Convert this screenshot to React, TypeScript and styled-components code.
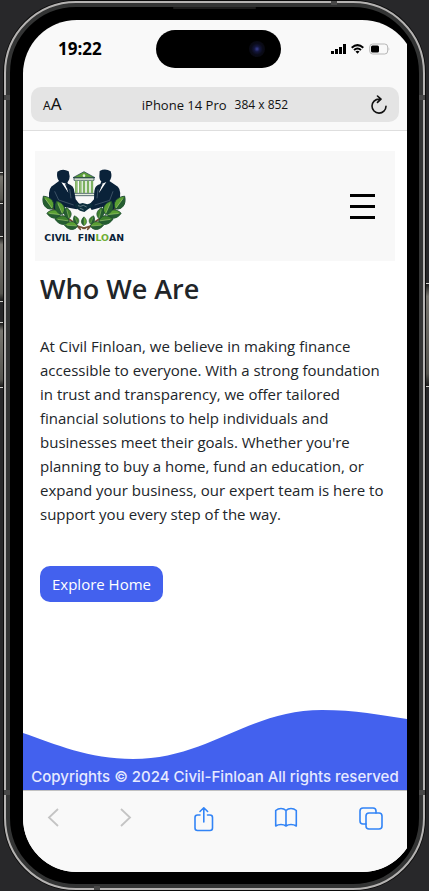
import React from "react";
import styled, { createGlobalStyle } from "styled-components";

const GlobalStyle = createGlobalStyle`
  * { box-sizing: border-box; }
  body {
    margin: 0;
    background: #28282a;
    color: #212529;
    font-family: "Open Sans", "Noto Sans", sans-serif;
  }
  h1, p { margin: 0; }
  button { font: inherit; color: inherit; border: 0; background: none; padding: 0; cursor: pointer; }
  svg { display: block; }
`;

const Stage = styled.div`
  display: flex;
  min-height: 100vh;
  padding: 1px 4px;
`;

const Phone = styled.div`
  position: relative;
  flex: 1;
  display: flex;
  border: 2px solid #b5b3b2;
  border-radius: 72px;
  background: #b5b3b2;
  box-shadow: 0 0 0 1px #0b0b0b;
`;

const Bezel = styled.div`
  flex: 1;
  min-width: 0;
  display: flex;
  padding: 13px 12px 12px 13px;
  border: 4px solid #333434;
  border-radius: 70px;
  background: #000;
`;

const Screen = styled.div`
  flex: 1;
  min-width: 0;
  display: flex;
  flex-direction: column;
  background: #f9f9f9;
  clip-path: inset(0 -9px 0 0 round 54px);
`;

const SideKey = styled.span<{ $side: "left" | "right"; $top: number; $length: number }>`
  position: absolute;
  top: ${(p) => p.$top}px;
  ${(p) => p.$side}: -6px;
  width: 3px;
  height: ${(p) => p.$length}px;
  border: solid #d0d0cc;
  border-width: 1px 0;
  background: linear-gradient(#1b1b1b, #77756f 12%, #55544f 88%, #1b1b1b);
`;

const Band = styled.span<{ $edge: "left" | "right"; $top: number }>`
  position: absolute;
  top: ${(p) => p.$top}px;
  ${(p) => p.$edge}: -2px;
  width: 6px;
  height: 5px;
  background: #484848;
`;

const CapBand = styled.span<{ $edge: "top" | "bottom"; $left: string }>`
  position: absolute;
  left: ${(p) => p.$left};
  ${(p) => p.$edge}: -2px;
  width: 6px;
  height: 4px;
  background: #484848;
`;

const Speaker = styled.span`
  position: absolute;
  top: 4px;
  left: 40%;
  right: 40%;
  height: 2px;
  border-radius: 1px;
  background: #1c1c1c;
`;

const StatusBar = styled.div`
  display: grid;
  grid-template-columns: 134fr 125px 126fr;
  align-items: center;
  padding-top: 10px;
`;

const Clock = styled.time`
  padding-left: 35px;
  color: #000;
  font-size: 17px;
  line-height: 24px;
  font-weight: 700;
`;

const Island = styled.div`
  display: flex;
  align-items: center;
  justify-content: flex-end;
  height: 38px;
  padding-right: 16px;
  border-radius: 19px;
  background: #000;
`;

const Lens = styled.span`
  width: 16px;
  height: 16px;
  border-radius: 50%;
  background: radial-gradient(circle, #30357e 0 6%, #14173f 24%, #0a0b19 50%, #060608 100%);
`;

const Signals = styled.div`
  display: flex;
  align-items: center;
  justify-content: flex-end;
  gap: 5px;
  padding-right: 17px;
`;

const AddressBar = styled.div`
  display: grid;
  grid-template-columns: 48px 1fr 48px;
  align-items: center;
  height: 35px;
  margin: 19px 8px 8px;
  border-radius: 10px;
  background: #e4e4e4;
  color: #111;
`;

const TextSize = styled.button`
  padding-left: 12px;
  text-align: left;
  font-family: "Noto Sans", sans-serif;
  font-size: 17px;
  line-height: 24px;
  small { font-size: 12px; }
`;

const Device = styled.div`
  display: flex;
  align-items: center;
  justify-content: center;
  gap: 8px;
  font-size: 13px;
  line-height: 20px;
  white-space: nowrap;
`;

const Resolution = styled.span`
  font-size: 12px;
`;

const Reload = styled.button`
  justify-self: end;
  padding-right: 11px;
`;

const Site = styled.div`
  flex: 1;
  display: flex;
  flex-direction: column;
  border-top: 1px solid #dedede;
  background: #fff;
`;

const Header = styled.header`
  display: flex;
  align-items: center;
  justify-content: space-between;
  height: 110px;
  margin: 20px 12px 0;
  padding: 0 20px 0 5px;
  background: #f8f8f8;
`;

const MenuButton = styled.button`
  display: grid;
  gap: 8px;
  width: 25px;
  span { height: 3px; background: #000; }
`;

const Main = styled.main`
  flex: 1;
  padding: 10px 17px 0;
`;

const Title = styled.h1`
  font-size: 27px;
  line-height: 36px;
  font-weight: 600;
`;

const Copy = styled.p`
  margin-top: 27px;
  font-size: 15px;
  line-height: 24px;
`;

const Explore = styled.button`
  height: 36px;
  margin-top: 40px;
  padding: 0 12px;
  border-radius: 10px;
  background: #4361ee;
  color: #fff;
  font-size: 15px;
  line-height: 24px;
`;

const Wave = styled.svg`
  width: 100%;
  height: 50px;
`;

const Copyright = styled.footer`
  height: 31px;
  background: #4361ee;
  color: #e6eaff;
  text-align: center;
  font-family: Inter, sans-serif;
  font-size: 15px;
  font-weight: 500;
  line-height: 36px;
  white-space: nowrap;
`;

const BrowserBar = styled.nav`
  display: grid;
  grid-template-columns: 73fr 78fr 82fr 85fr 24px;
  align-items: start;
  justify-items: start;
  height: 82px;
  padding: 15px 24px 0 18px;
  border-top: 1px solid #c2c2c2;
  background: #f9f9f9;
`;

const Leaf = ({ x, y, r, s = 1, dark = false }: { x: number; y: number; r: number; s?: number; dark?: boolean }) => (
  <g transform={`translate(${x} ${y}) rotate(${r}) scale(${s})`}>
    <path d="M0 0C-15-8-15-25 0-38C15-25 15-8 0 0Z" fill={dark ? "#3d7f2c" : "#5a9f33"} stroke="#1b4533" strokeWidth="2" />
    <path d="M0 0C-15-8-15-25 0-38Z" fill="#255d30" />
    <path d="M0-3V-31" stroke="#a9cf7c" strokeWidth="1.5" />
  </g>
);

const Branch = () => (
  <g>
    <path d="M64 184Q88 229 165 250M98 214Q126 222 151 253" fill="none" stroke="#735034" strokeWidth="5" strokeLinecap="round" />
    <Leaf x={92} y={209} r={-84} s={1.1} />
    <Leaf x={68} y={192} r={-36} s={1.25} />
    <Leaf x={98} y={208} r={-24} s={1.15} />
    <Leaf x={118} y={228} r={-82} s={1.15} dark />
    <Leaf x={117} y={221} r={-14} s={0.9} dark />
    <Leaf x={143} y={243} r={-86} s={1.05} />
    <Leaf x={143} y={237} r={-22} s={0.7} dark />
  </g>
);

const Logo = () => (
  <svg width="88" height="80" viewBox="30 63 264 240" role="img" aria-label="Civil Finloan">
    <g fill="#5d9f3a" stroke="#0c2e3a" strokeWidth="2">
      <path d="M129 98L162 80L195 98Z" />
      <path d="M132 99H192V106H132ZM130 145H194V152H130Z" fill="#e5eddc" />
    </g>
    <circle cx="162" cy="92" r="4" fill="#e5eddc" />
    <path d="M139 107V144M151 107V144M162 107V144M174 107V144M186 107V144" stroke="#5f9e43" strokeWidth="7" />
    <path d="M139 107V144M151 107V144M162 107V144M174 107V144M186 107V144" stroke="#b9d49d" strokeWidth="2" />
    <g fill="#0a2239">
      <path d="M82 80Q98 69 116 79L119 94Q118 109 110 113Q101 119 91 112L85 105Q79 95 82 80Z" />
      <path d="M88 107L111 109L114 116Q132 121 133 140L137 163L150 179L140 193L104 186L107 208L70 196L57 160Q54 126 72 119Z" />
      <path d="M209 78Q226 69 242 79Q247 94 241 104L236 112Q226 118 217 112Q208 107 208 94Z" />
      <path d="M214 109L237 107L256 120Q274 127 270 157L258 192L216 208L219 185L185 195L176 181L192 163L193 138Q194 121 211 117Z" />
    </g>
    <path d="M94 112L108 116L115 143ZM229 111L215 117L207 144Z" fill="#fff" />
    <path d="M105 118L109 117L115 140ZM218 117L213 118L208 139Z" fill="#0a2239" />
    <path d="M74 139L86 165L131 180M249 139L239 166L194 180M119 132L123 160M204 133L201 160" fill="none" stroke="#6c8190" strokeWidth="1.5" />
    <path d="M134 180L140 174L150 176L158 174L172 178L184 174L190 183L175 192L163 201L150 197L138 189Z" fill="#0b2d3c" />
    <path d="M144 182L152 184L160 181L170 186M149 190L156 192L161 195" fill="none" stroke="#b9c6c8" strokeWidth="1.5" />
    <Branch />
    <g transform="translate(324 0) scale(-1 1)"><Branch /></g>
    <Leaf x={162} y={242} r={0} s={0.7} />
    <text x="43" y="287" fontFamily="DejaVu Sans, sans-serif" fontWeight="700" fontSize="28" fill="#0a2239">
      CIVIL{"\u00a0\u00a0"}FIN<tspan fill="#6fae35">LO</tspan>AN
    </text>
  </svg>
);

const blue = { fill: "none", stroke: "#3284f6", strokeWidth: 1.6, strokeLinecap: "round", strokeLinejoin: "round" } as const;

export default function App() {
  return (
    <Stage>
      <GlobalStyle />
      <Phone>
        <SideKey $side="left" $top={169} $length={32} />
        <SideKey $side="left" $top={233} $length={66} />
        <SideKey $side="left" $top={319} $length={66} />
        <SideKey $side="right" $top={280} $length={104} />
        <Bezel>
          <Screen>
            <StatusBar>
              <Clock>19:22</Clock>
              <Island><Lens /></Island>
              <Signals>
                <svg width="15" height="10" viewBox="0 0 15 10" aria-label="Mobile signal">
                  <path d="M0 7h3v3H0zM4 5h3v5H4zM8 3h3v7H8zM12 0h3v10h-3z" />
                </svg>
                <svg width="13" height="10" viewBox="0 0 13 10" fill="none" stroke="#000" strokeWidth="2" aria-label="Wi-Fi">
                  <path d="M.7 3.7Q6.5-1.4 12.3 3.7M3 6Q6.5 3 10 6" />
                  <path d="M4.5 7.5Q6.5 6 8.5 7.5L6.5 9.8Z" fill="#000" stroke="none" />
                </svg>
                <svg width="21" height="12" viewBox="0 0 21 12" aria-label="Battery">
                  <rect x=".7" y="1" width="18" height="10" rx="3" fill="none" stroke="#b7b7b7" />
                  <rect x="2" y="2.5" width="8" height="7" rx="1.5" />
                  <path d="M19.7 4.3Q21 6 19.7 7.7Z" fill="#aaa" />
                </svg>
              </Signals>
            </StatusBar>
            <AddressBar>
              <TextSize aria-label="Text size"><small>A</small>A</TextSize>
              <Device>iPhone 14 Pro <Resolution>384 x 852</Resolution></Device>
              <Reload aria-label="Reload">
                <svg width="18" height="20" viewBox="0 0 18 20" fill="none" stroke="#111" strokeWidth="1.6" strokeLinecap="round" strokeLinejoin="round">
                  <path d="M10.5 4.1H9A7 7 0 1 0 16 11.2M7.5 1L11 4.2L7.5 7.4" />
                </svg>
              </Reload>
            </AddressBar>
            <Site>
              <Header>
                <Logo />
                <MenuButton aria-label="Open menu"><span /><span /><span /></MenuButton>
              </Header>
              <Main>
                <Title>Who We Are</Title>
                <Copy>
                  At Civil Finloan, we believe in making finance accessible to everyone. With a strong
                  foundation in trust and transparency, we offer tailored financial solutions to help
                  individuals and businesses meet their goals. Whether you're planning to buy a home, fund
                  an education, or expand your business, our expert team is here to support you every step
                  of the way.
                </Copy>
                <Explore>Explore Home</Explore>
              </Main>
              <Wave viewBox="0 0 384 50" preserveAspectRatio="none" aria-hidden="true">
                <path d="M0 24C32 35 66 50 110 50C185 50 225 1 299 1C332 1 358 6 384 10V50H0Z" fill="#4361ee" />
              </Wave>
              <Copyright>Copyrights © 2024 Civil-Finloan All rights reserved</Copyright>
            </Site>
            <BrowserBar aria-label="Browser">
              <button aria-label="Back">
                <svg width="24" height="24" viewBox="0 0 24 24" fill="none" stroke="#c4c4c4" strokeWidth="1.8"><path d="M17 3L8 11.5L17 20" /></svg>
              </button>
              <button aria-label="Forward">
                <svg width="24" height="24" viewBox="0 0 24 24" fill="none" stroke="#c4c4c4" strokeWidth="1.8"><path d="M7 3L16 11.5L7 20" /></svg>
              </button>
              <button aria-label="Share">
                <svg width="24" height="26" viewBox="0 0 24 26" {...blue}><path d="M8 9H5.5Q3 9 3 11.5V22Q3 24.5 5.5 24.5H18Q20.5 24.5 20.5 22V11.5Q20.5 9 18 9H15.5M11.8 16V2M8 5.5L11.8 1.8L15.6 5.5" /></svg>
              </button>
              <button aria-label="Bookmarks">
                <svg width="24" height="24" viewBox="0 0 24 24" {...blue}><path d="M12 4.5V20M12 4.5Q10 2.5 7 2.5Q4 2.5 1.7 4.5V20Q4 18.5 7 18.5Q10 18.5 12 20Q14 18.5 17 18.5Q20 18.5 22.3 20V4.5Q20 2.5 17 2.5Q14 2.5 12 4.5Z" /></svg>
              </button>
              <button aria-label="Tabs">
                <svg width="24" height="25" viewBox="0 0 24 25" {...blue}><path d="M7 18H4Q1 18 1 15V5Q1 2 4 2H14Q17 2 17 5V7" /><rect x="7" y="7" width="16" height="16" rx="3" /></svg>
              </button>
            </BrowserBar>
          </Screen>
        </Bezel>
        <Speaker />
        <Band $edge="left" $top={92} />
        <Band $edge="right" $top={92} />
        <Band $edge="left" $top={787} />
        <Band $edge="right" $top={787} />
        <CapBand $edge="top" $left="78%" />
        <CapBand $edge="bottom" $left="21%" />
      </Phone>
    </Stage>
  );
}
